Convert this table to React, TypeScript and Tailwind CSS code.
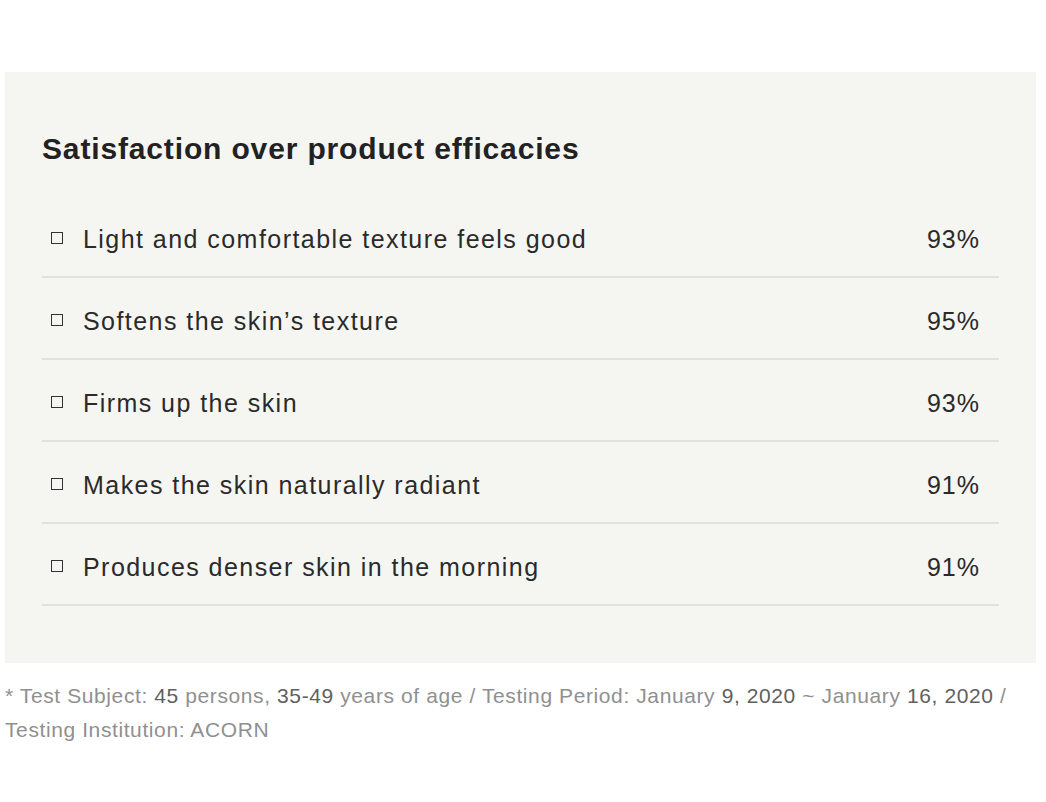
import React from "react";

const rows = [
  { label: "Light and comfortable texture feels good", value: "93%" },
  { label: "Softens the skin\u2019s texture", value: "95%" },
  { label: "Firms up the skin", value: "93%" },
  { label: "Makes the skin naturally radiant", value: "91%" },
  { label: "Produces denser skin in the morning", value: "91%" },
];

function N({ children }: { children: React.ReactNode }) {
  return <span className="text-[#5f5f5f]">{children}</span>;
}

export default function App() {
  return (
    <div
      className="min-h-[802px] w-[1046px] bg-white pt-[72px]"
      style={{ fontFamily: '"Liberation Sans", Arial, sans-serif' }}
    >
      <div className="ml-[5px] w-[1031px] bg-[#f5f5f2] px-[37px] pt-[59px] pb-[57px]">
        <h2 className="text-[30px] leading-[36px] font-bold tracking-[0.85px] text-[#222222]">
          Satisfaction over product efficacies
        </h2>
        <div className="mt-[29px]">
          {rows.map((r) => (
            <div
              key={r.label}
              className="flex h-[82px] items-center border-b-2 border-[#e1e1de] pt-[8px] pl-[9px] pr-[19px]"
            >
              <span className="mr-[20px] h-[12px] w-[12px] -translate-y-[2px] border-[1.5px] border-[#333333]" />
              <span className="flex-1 text-[25px] tracking-[1.45px] text-[#2a2a2a]">
                {r.label}
              </span>
              <span className="text-[25px] tracking-[1px] text-[#2a2a2a]">{r.value}</span>
            </div>
          ))}
        </div>
      </div>
      <p className="mt-[16px] w-[1030px] pl-[5px] text-[21px] leading-[34px] tracking-[0.6px] text-[#909090]">
        * Test Subject: <N>45</N> persons, <N>35-49</N> years of age / Testing Period: January{" "}
        <N>9, 2020</N> ~ January <N>16, 2020</N> / Testing Institution: ACORN
      </p>
    </div>
  );
}
